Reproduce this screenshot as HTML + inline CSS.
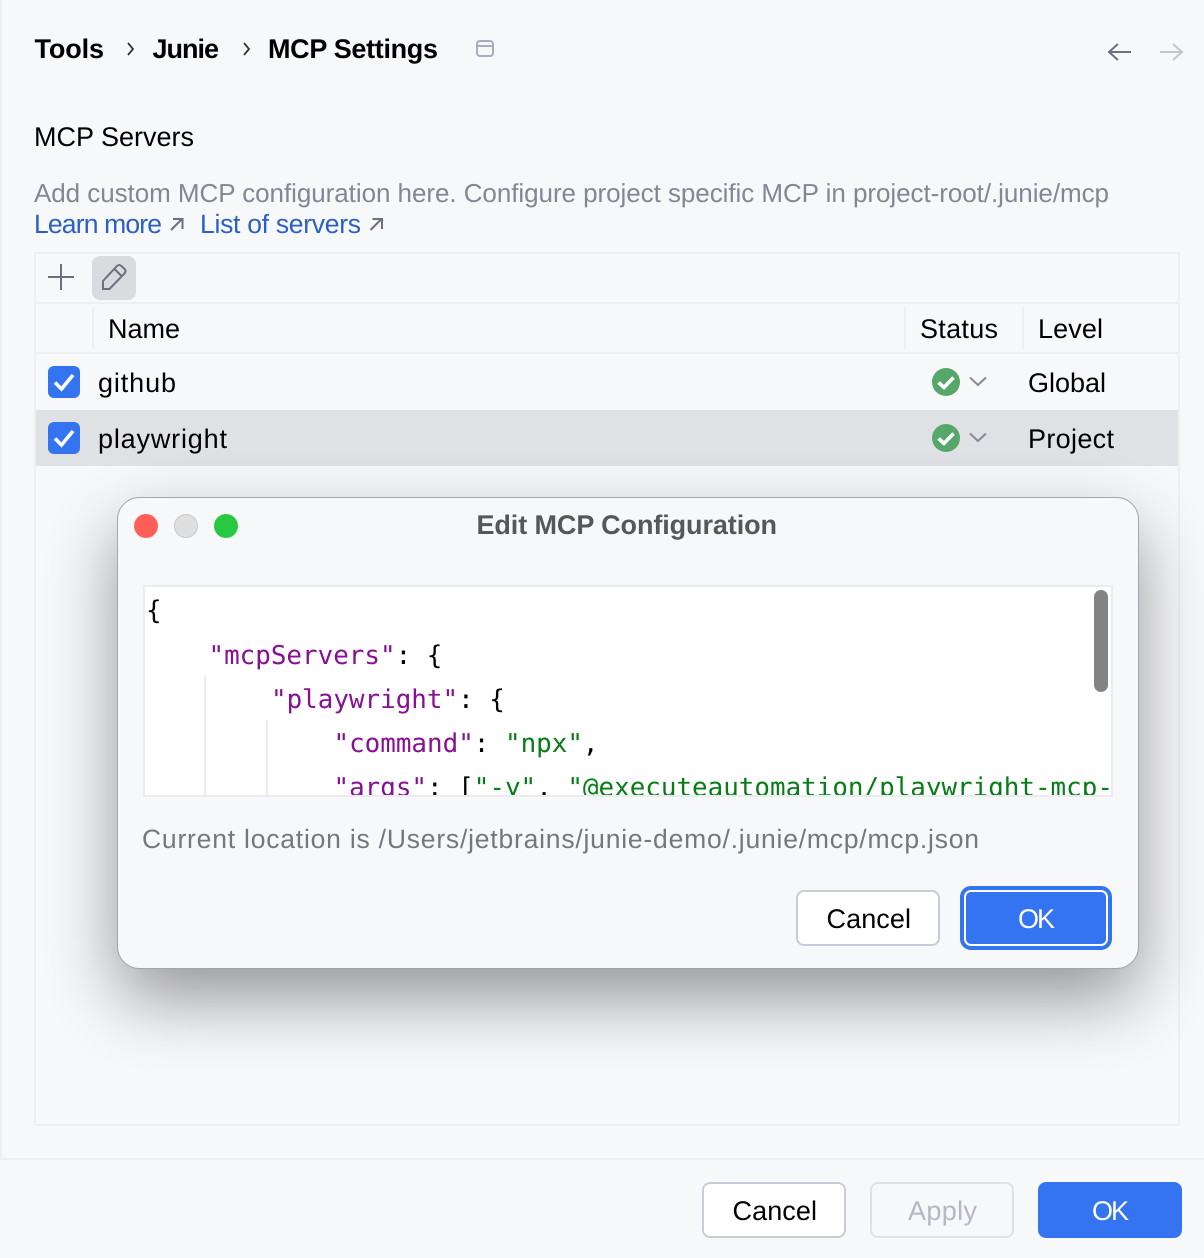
<!DOCTYPE html>
<html><head><meta charset="utf-8"><style>
html,body{margin:0;padding:0;background:#f7f8fa;width:1204px;height:1258px;overflow:hidden}
svg{display:block}
text{font-family:"Liberation Sans",sans-serif;font-size:27px;fill:#000;text-rendering:geometricPrecision}
.b{font-weight:700}
.m{font-family:"DejaVu Sans Mono","Liberation Mono",monospace;font-size:25.9px}
.k{fill:#871094}.s{fill:#067d17}
.g{fill:#828792;font-size:26px}
.l{fill:#2a5fc4;font-size:26.500px}
</style></head><body>
<svg width="1204" height="1258" viewBox="0 0 1204 1258" xmlns="http://www.w3.org/2000/svg">
<defs>
<filter id="sh" x="-20%" y="-40%" width="140%" height="180%"><feGaussianBlur stdDeviation="36"/></filter>
<clipPath id="cc"><rect x="146" y="587" width="965" height="208"/></clipPath>
</defs>
<rect width="1204" height="1258" fill="#f7f8fa"/>
<rect x="0" y="0" width="2" height="1158" fill="#eeeff2"/>

<text class="b" x="34.500" y="58" textLength="69.500">Tools</text>
<path d="M128 43l5 6-5 6" fill="none" stroke="#33353a" stroke-width="1.8"/>
<text class="b" x="152.500" y="58" textLength="66.500">Junie</text>
<path d="M244 43l5 6-5 6" fill="none" stroke="#33353a" stroke-width="1.8"/>
<text class="b" x="268" y="58" textLength="170">MCP Settings</text>
<rect x="477" y="41" width="16" height="15" rx="3" fill="none" stroke="#a8adbd" stroke-width="2"/>
<path d="M477 46h16" stroke="#a8adbd" stroke-width="2"/>
<path d="M1131 52h-22M1118 44l-9 8 9 8" fill="none" stroke="#6c707e" stroke-width="2"/>
<path d="M1160 52h22M1173 44l9 8-9 8" fill="none" stroke="#c2c5cc" stroke-width="2"/>

<text x="34" y="146" textLength="160">MCP Servers</text>
<text class="g" x="34" y="202" textLength="1075">Add custom MCP configuration here. Configure project specific MCP in project-root/.junie/mcp</text>
<text class="l" x="34" y="233" textLength="128">Learn more</text>
<path d="M171 230l11-11M173 219h9.500v10" fill="none" stroke="#6c707e" stroke-width="2"/>
<text class="l" x="200" y="233" textLength="161">List of servers</text>
<path d="M370.500 230l11-11M372.500 219h9.500v10" fill="none" stroke="#6c707e" stroke-width="2"/>

<rect x="35" y="253" width="1144" height="872" fill="none" stroke="#eeeff2" stroke-width="2"/>
<path d="M36 303h1142M36 353h1142" stroke="#eeeff2" stroke-width="2"/>
<path d="M93 306v44M905 306v44M1023 306v44" stroke="#eeeff2" stroke-width="2"/>
<path d="M48 277h26M61 264v26" stroke="#6c707e" stroke-width="2"/>
<rect x="92" y="256" width="44" height="44" rx="8" fill="#d9dbde"/>
<path d="M103 289v-8l14-15q2-2 4.500 0l3 3q2 2 0 4.500l-15 15.500zM114.500 269l7.500 7.500" fill="none" stroke="#6c707e" stroke-width="2"/>

<text x="108" y="338" textLength="72">Name</text>
<text x="920" y="338" textLength="78">Status</text>
<text x="1038" y="338" textLength="65">Level</text>

<rect x="36" y="410" width="1142" height="56" fill="#dfe1e5"/>

<rect x="48" y="366" width="32" height="32" rx="6" fill="#3574f0"/>
<path d="M55 382.500l6.500 6.500 11.500-14" fill="none" stroke="#fff" stroke-width="3.600"/>
<rect x="48" y="422" width="32" height="32" rx="6" fill="#3574f0"/>
<path d="M55 438.500l6.500 6.500 11.500-14" fill="none" stroke="#fff" stroke-width="3.600"/>
<text x="98" y="392" textLength="78">github</text>
<text x="98" y="448" textLength="129">playwright</text>

<circle cx="946" cy="382" r="14" fill="#55a76a"/>
<path d="M938.500 382.500l5.500 5 9.500-10" fill="none" stroke="#fff" stroke-width="3.600"/>
<path d="M970 377.500l8 7.500 8-7.500" fill="none" stroke="#868a98" stroke-width="2"/>
<circle cx="946" cy="438" r="14" fill="#55a76a"/>
<path d="M938.500 438.500l5.500 5 9.500-10" fill="none" stroke="#fff" stroke-width="3.600"/>
<path d="M970 433.500l8 7.500 8-7.500" fill="none" stroke="#868a98" stroke-width="2"/>
<text x="1028" y="392" textLength="78">Global</text>
<text x="1028" y="448" textLength="86">Project</text>

<rect x="118" y="528" width="1020" height="470" rx="22" fill="#000" opacity=".4" filter="url(#sh)"/>
<rect x="117.500" y="497.500" width="1021" height="471" rx="22" fill="#f7f8fa" stroke="#a4a5a8" stroke-width="1"/>

<circle cx="146" cy="526" r="12" fill="#ff5f57"/>
<circle cx="186" cy="526" r="11.500" fill="#dfdfdf" stroke="#c9c9c9"/>
<circle cx="226" cy="526" r="12" fill="#28c840"/>
<text class="b" x="476.500" y="534" textLength="300.500" style="fill:#55575b">Edit MCP Configuration</text>

<rect x="144" y="586" width="968" height="210" fill="#fff" stroke="#ebecf0" stroke-width="2"/>
<g clip-path="url(#cc)">
<path d="M205 676v121M267 720v77" stroke="#ebecf0" stroke-width="2"/>
<text class="m" x="146" y="619">{</text>
<text class="m" x="208.500" y="664"><tspan class="k">"mcpServers"</tspan>: {</text>
<text class="m" x="271" y="708"><tspan class="k">"playwright"</tspan>: {</text>
<text class="m" x="333.500" y="752"><tspan class="k">"command"</tspan>: <tspan class="s">"npx"</tspan>,</text>
<text class="m" x="333.500" y="796"><tspan class="k">"args"</tspan>: [<tspan class="s">"-y"</tspan>, <tspan class="s">"@executeautomation/playwright-mcp-server"</tspan></text>
</g>
<rect x="1094" y="590" width="14" height="102" rx="7" fill="#848484"/>

<text x="142" y="848" textLength="837" style="fill:#75777c;font-size:26.500px">Current location is /Users/jetbrains/junie-demo/.junie/mcp/mcp.json</text>

<rect x="797" y="891" width="142" height="54" rx="7" fill="#fff" stroke="#c9ccd6" stroke-width="2"/>
<text x="826.500" y="928" textLength="84.500">Cancel</text>
<rect x="962" y="888" width="148" height="60" rx="9" fill="#3574f0" stroke="#3574f0" stroke-width="4"/>
<rect x="965" y="891" width="142" height="54" rx="6" fill="#3574f0" stroke="#fff" stroke-width="2"/>
<text x="1018" y="928" textLength="37" style="fill:#fff">OK</text>

<path d="M0 1159h1204" stroke="#eeeff2" stroke-width="2"/>
<rect x="703" y="1183" width="142" height="54" rx="7" fill="#fff" stroke="#c9ccd6" stroke-width="2"/>
<text x="732.500" y="1220" textLength="84.500">Cancel</text>
<rect x="871" y="1183" width="142" height="54" rx="7" fill="none" stroke="#dfe1e5" stroke-width="2"/>
<text x="908" y="1220" textLength="69" style="fill:#b4b8c4">Apply</text>
<rect x="1038" y="1182" width="144" height="56" rx="8" fill="#3574f0"/>
<text x="1092" y="1220" textLength="37" style="fill:#fff">OK</text>
</svg>
</body></html>
